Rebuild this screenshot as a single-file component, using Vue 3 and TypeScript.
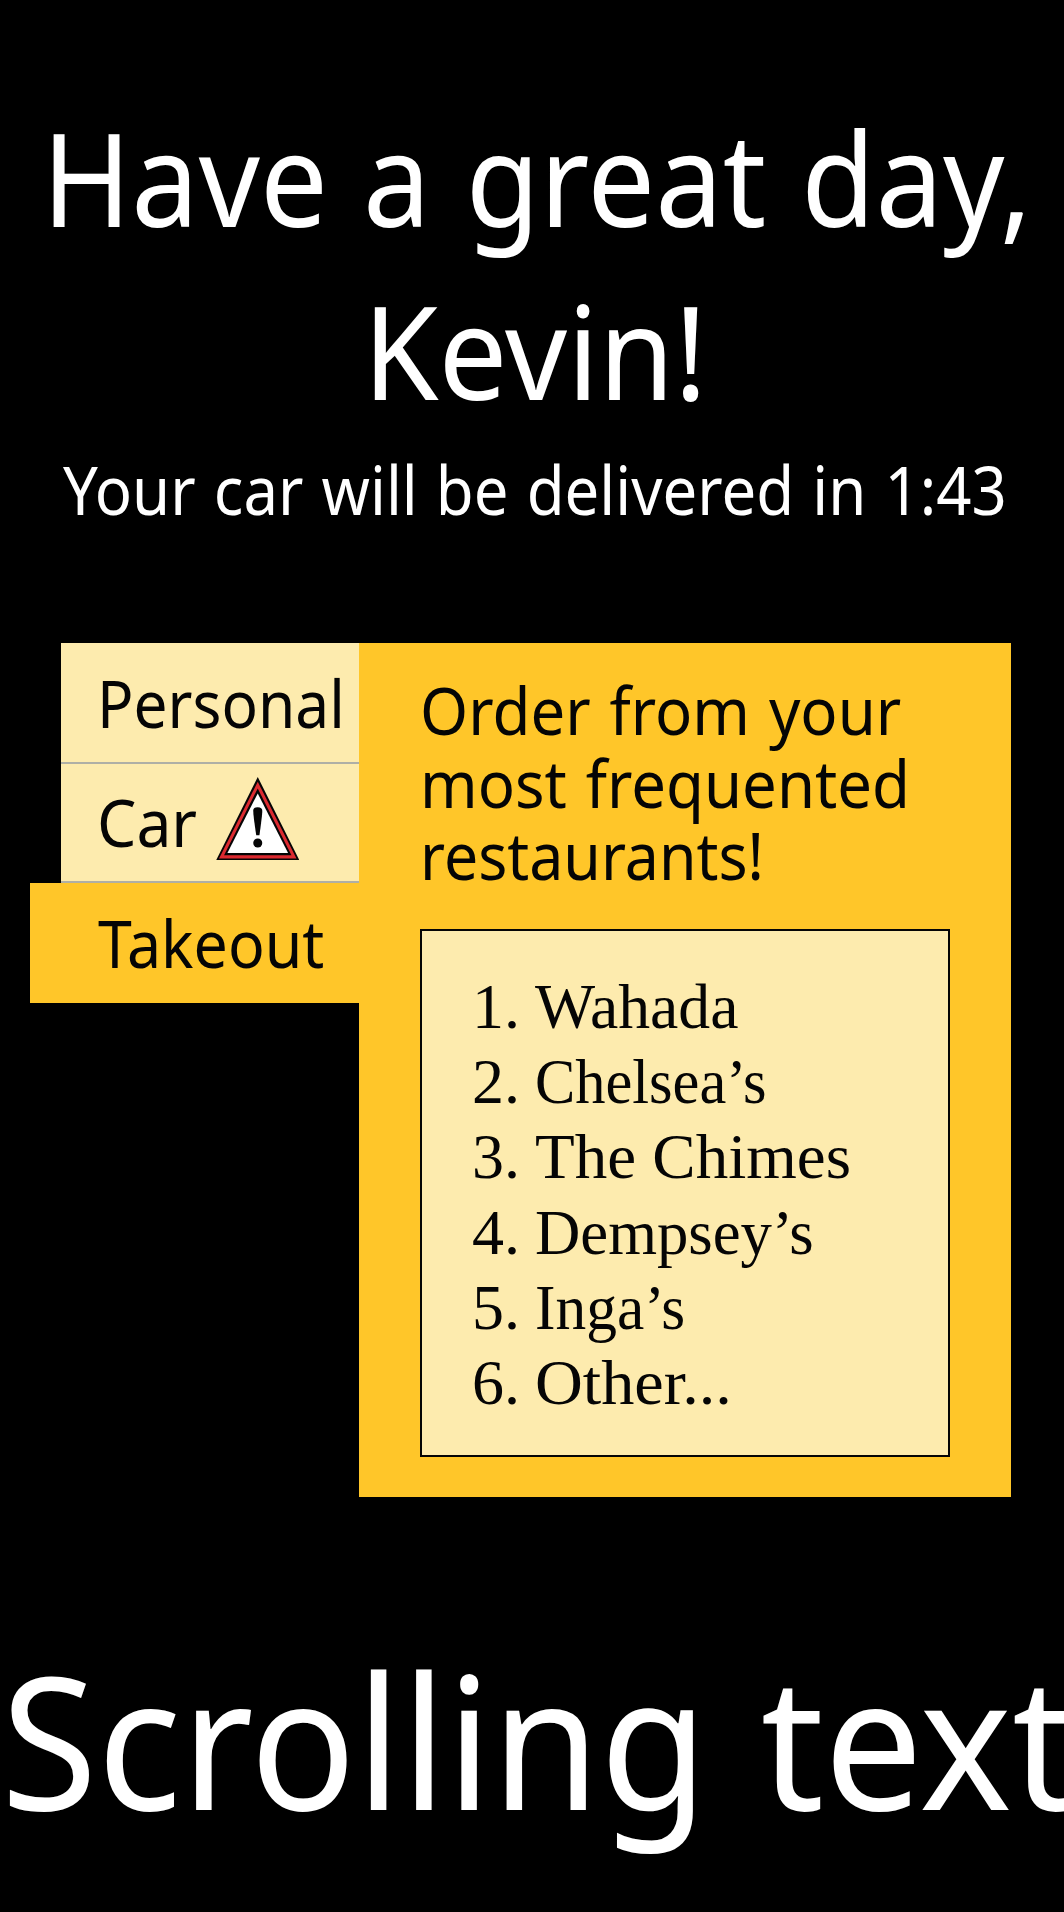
<script setup lang="ts">
interface Line {
  text: string
  stretch: number
}

interface Tab extends Line {
  id: string
  alert?: boolean
  active?: boolean
}

const greeting: Line[] = [
  { text: 'Have a great day,', stretch: 0.934 },
  { text: 'Kevin!', stretch: 0.947 },
]

const status: Line = { text: 'Your car will be delivered in 1:43', stretch: 0.92 }

const tabs: Tab[] = [
  { id: 'personal', text: 'Personal', stretch: 0.915 },
  { id: 'car', text: 'Car', stretch: 0.944, alert: true },
  { id: 'takeout', text: 'Takeout', stretch: 0.922, active: true },
]

const prompt: Line[] = [
  { text: 'Order from your', stretch: 0.935 },
  { text: 'most frequented', stretch: 0.935 },
  { text: 'restaurants!', stretch: 0.921 },
]

const restaurants: Line[] = [
  { text: 'Wahada', stretch: 0.995 },
  { text: 'Chelsea’s', stretch: 0.944 },
  { text: 'The Chimes', stretch: 1.016 },
  { text: 'Dempsey’s', stretch: 0.98 },
  { text: 'Inga’s', stretch: 0.96 },
  { text: 'Other...', stretch: 1.035 },
]

const ticker: Line = { text: 'Scrolling text', stretch: 0.952 }

const fit = (line: Line) => ({ transform: `scaleX(${line.stretch})` })
</script>

<template>
  <main class="screen">
    <header class="header">
      <h1 class="greeting">
        <span v-for="line in greeting" :key="line.text" class="line" :style="fit(line)">{{ line.text }}</span>
      </h1>
      <p class="status"><span class="line" :style="fit(status)">{{ status.text }}</span></p>
    </header>

    <section class="board">
      <nav class="tabs">
        <div
          v-for="tab in tabs"
          :key="tab.id"
          class="tab"
          :class="[tab.id, { active: tab.active }]"
        >
          <span class="line" :style="fit(tab)">{{ tab.text }}</span>
          <svg v-if="tab.alert" class="alert" viewBox="48 50 249 249" aria-hidden="true">
            <polygon points="172.5,50 297,299 48,299" fill="#050505" />
            <polygon points="172.5,64 288,293 57,293" fill="#dc2a30" />
            <polygon points="172.5,84 273,283 72,283" fill="#050505" />
            <polygon points="172.5,99 263,277 82,277" fill="#fff" />
            <path d="M159 151 Q159 140 172.5 140 Q186 140 186 151 Q186 165 177.5 224 H168 Q159 165 159 151 Z" fill="#050505" />
            <circle cx="172.5" cy="247" r="13.5" fill="#050505" />
          </svg>
        </div>
      </nav>

      <div class="panel">
        <h2 class="prompt">
          <span v-for="line in prompt" :key="line.text" class="line" :style="fit(line)">{{ line.text }}</span>
        </h2>
        <ol class="list">
          <li v-for="(item, i) in restaurants" :key="item.text" class="item">
            <span class="num">{{ i + 1 }}.</span>
            <span class="line" :style="fit(item)">{{ item.text }}</span>
          </li>
        </ol>
      </div>
    </section>

    <footer class="ticker"><span class="line" :style="fit(ticker)">{{ ticker.text }}</span></footer>
  </main>
</template>

<style>
html,
body {
  background: #000;
}
</style>

<style scoped>
.screen {
  box-sizing: border-box;
  width: 1064px;
  height: 1912px;
  padding-top: 90.5px;
  overflow: hidden;
  background: #000;
  color: #fff;
  font-family: "Noto Sans", "Open Sans", sans-serif;
}

.line {
  display: block;
  width: max-content;
  white-space: nowrap;
  transform-origin: 0 50%;
}

.greeting {
  margin: 0;
  font-size: 129px;
  font-weight: 400;
  line-height: 173px;
  word-spacing: 4px;
}

.greeting .line {
  margin-left: 41.5px;
}

.greeting .line + .line {
  margin-left: 362.8px;
}

.status {
  margin: 7.5px 0 0 63px;
  font-size: 67px;
  line-height: 90px;
  word-spacing: 2.3px;
}

.board {
  display: flex;
  align-items: flex-start;
  margin-top: 109px;
  padding-left: 29.5px;
  color: #050505;
  font-size: 66px;
}

.tabs {
  display: flex;
  flex-direction: column;
  align-items: flex-end;
  width: 329.5px;
}

.tab {
  box-sizing: border-box;
  display: flex;
  align-items: flex-start;
  width: 298px;
  height: 121px;
  padding-left: 36.3px;
  background: linear-gradient(#afafa6, #afafa6) 0 100% / 100% 2px no-repeat #fdebae;
  line-height: 119px;
}

.tab.car {
  height: 119px;
  padding-left: 35.7px;
  line-height: 115px;
}

.tab.active {
  width: 329.5px;
  height: 120px;
  padding-left: 68.5px;
  background: #ffc629;
}

.alert {
  width: 83.5px;
  height: 83.5px;
  margin: 12.6px 0 0 12.9px;
}

.panel {
  box-sizing: border-box;
  width: 651.5px;
  height: 854px;
  padding: 30.3px 60.5px 0 61px;
  background: #ffc629;
}

.prompt {
  margin: 0;
  font-size: 66px;
  font-weight: 400;
  line-height: 72.5px;
  word-spacing: 3px;
}

.list {
  box-sizing: border-box;
  height: 528px;
  margin: 38px 0 0;
  padding: 38.5px 0 0 50px;
  border: 2px solid #050505;
  background: #fdebae;
  font-family: "Liberation Serif", serif;
  font-size: 64px;
  line-height: 75.08px;
  list-style: none;
}

.item {
  display: flex;
}

.num {
  width: 62.5px;
}

.ticker {
  margin: 141.6px 0 0 1px;
  font-size: 184px;
  line-height: 200px;
  word-spacing: 8px;
}
</style>
